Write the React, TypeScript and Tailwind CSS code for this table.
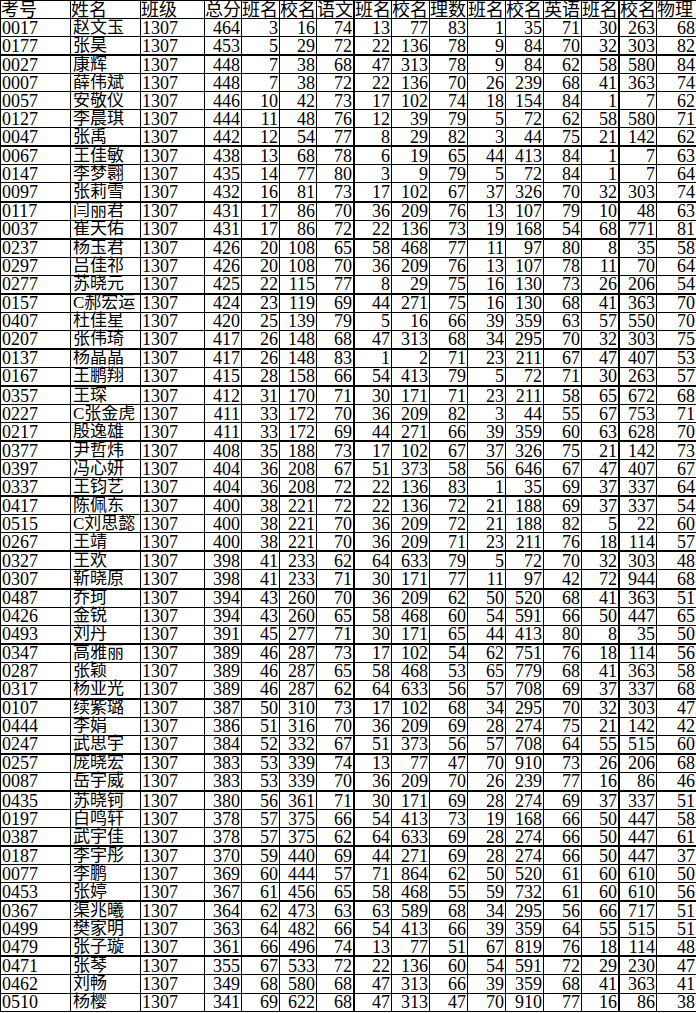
import React from 'react'

const HEAD = ['考号', '姓名', '班级', '总分', '班名', '校名', '语文', '班名', '校名', '理数', '班名', '校名', '英语', '班名', '校名', '物理']

const RAW = `0017 赵文玉 1307 464 3 16 74 13 77 83 1 35 71 30 263 68
0177 张昊 1307 453 5 29 72 22 136 78 9 84 70 32 303 82
0027 康辉 1307 448 7 38 68 47 313 78 9 84 62 58 580 84
0007 薛伟斌 1307 448 7 38 72 22 136 70 26 239 68 41 363 74
0057 安敬仪 1307 446 10 42 73 17 102 74 18 154 84 1 7 62
0127 李晨琪 1307 444 11 48 76 12 39 79 5 72 62 58 580 71
0047 张禹 1307 442 12 54 77 8 29 82 3 44 75 21 142 62
0067 王佳敏 1307 438 13 68 78 6 19 65 44 413 84 1 7 63
0147 李梦翾 1307 435 14 77 80 3 9 79 5 72 84 1 7 64
0097 张莉雪 1307 432 16 81 73 17 102 67 37 326 70 32 303 74
0117 闫丽君 1307 431 17 86 70 36 209 76 13 107 79 10 48 63
0037 崔天佑 1307 431 17 86 72 22 136 73 19 168 54 68 771 81
0237 杨玉君 1307 426 20 108 65 58 468 77 11 97 80 8 35 58
0297 吕佳祁 1307 426 20 108 70 36 209 76 13 107 78 11 70 64
0277 苏晓元 1307 425 22 115 77 8 29 75 16 130 73 26 206 54
0157 C郝宏运 1307 424 23 119 69 44 271 75 16 130 68 41 363 70
0407 杜佳星 1307 420 25 139 79 5 16 66 39 359 63 57 550 70
0207 张伟琦 1307 417 26 148 68 47 313 68 34 295 70 32 303 75
0137 杨晶晶 1307 417 26 148 83 1 2 71 23 211 67 47 407 53
0167 王鹏翔 1307 415 28 158 66 54 413 79 5 72 71 30 263 57
0357 王琛 1307 412 31 170 71 30 171 71 23 211 58 65 672 68
0227 C张金虎 1307 411 33 172 70 36 209 82 3 44 55 67 753 71
0217 殷逸雄 1307 411 33 172 69 44 271 66 39 359 60 63 628 70
0377 尹哲炜 1307 408 35 188 73 17 102 67 37 326 75 21 142 73
0397 冯心妍 1307 404 36 208 67 51 373 58 56 646 67 47 407 67
0337 王钧艺 1307 404 36 208 72 22 136 83 1 35 69 37 337 64
0417 陈佩东 1307 400 38 221 72 22 136 72 21 188 69 37 337 54
0515 C刘思懿 1307 400 38 221 70 36 209 72 21 188 82 5 22 60
0267 王靖 1307 400 38 221 70 36 209 71 23 211 76 18 114 57
0327 王欢 1307 398 41 233 62 64 633 79 5 72 70 32 303 48
0307 靳晓原 1307 398 41 233 71 30 171 77 11 97 42 72 944 68
0487 乔珂 1307 394 43 260 70 36 209 62 50 520 68 41 363 51
0426 金锐 1307 394 43 260 65 58 468 60 54 591 66 50 447 65
0493 刘丹 1307 391 45 277 71 30 171 65 44 413 80 8 35 50
0347 高雅丽 1307 389 46 287 73 17 102 54 62 751 76 18 114 56
0287 张颖 1307 389 46 287 65 58 468 53 65 779 68 41 363 58
0317 杨亚光 1307 389 46 287 62 64 633 56 57 708 69 37 337 68
0107 续紫璐 1307 387 50 310 73 17 102 68 34 295 70 32 303 47
0444 李娟 1307 386 51 316 70 36 209 69 28 274 75 21 142 42
0247 武思宇 1307 384 52 332 67 51 373 56 57 708 64 55 515 60
0257 庞晓宏 1307 383 53 339 74 13 77 47 70 910 73 26 206 68
0087 岳宇威 1307 383 53 339 70 36 209 70 26 239 77 16 86 46
0435 苏晓钶 1307 380 56 361 71 30 171 69 28 274 69 37 337 51
0197 白鸣轩 1307 378 57 375 66 54 413 73 19 168 66 50 447 58
0387 武宇佳 1307 378 57 375 62 64 633 69 28 274 66 50 447 61
0187 李宇彤 1307 370 59 440 69 44 271 69 28 274 66 50 447 37
0077 李鹏 1307 369 60 444 57 71 864 62 50 520 61 60 610 50
0453 张婷 1307 367 61 456 65 58 468 55 59 732 61 60 610 56
0367 渠兆曦 1307 364 62 473 63 63 589 68 34 295 56 66 717 51
0499 樊家明 1307 363 64 482 66 54 413 66 39 359 64 55 515 51
0479 张子璇 1307 361 66 496 74 13 77 51 67 819 76 18 114 48
0471 张琴 1307 355 67 533 72 22 136 60 54 591 72 29 230 47
0462 刘畅 1307 349 68 580 68 47 313 66 39 359 68 41 363 41
0510 杨樱 1307 341 69 622 68 47 313 47 70 910 77 16 86 38`

const ROWS = RAW.split('\n').map((line) => line.trim().split(' '))

// rows whose bottom rule prints heavier in the scan
const THICK = new Set([1, 6, 9, 11, 14, 17, 19, 22, 25, 28, 30, 33, 36, 39, 41, 44, 47, 50, 54])
// columns whose right rule prints heavier
const THICK_COL = new Set([6, 13])

const font = { fontFamily: '"Liberation Serif", "Noto Sans CJK SC", serif' }

const gridCols =
  'grid grid-cols-[70px_70px_64px_37px_38px_37px_38px_37px_38px_38px_38px_38px_38px_38px_37px_40px]'

const rule = (ci: number) => (THICK_COL.has(ci) ? 'border-r-2' : 'border-r')

export default function App() {
  return (
    <div className="w-[696px] h-[1013px] overflow-hidden bg-white text-black" style={font}>
      <div className="flex h-[1012px] w-[736px] flex-col border-l border-black">
        <div className={`${gridCols} flex-1 border-t border-b border-black`}>
          {HEAD.map((h, i) => (
            <div
              key={i}
              className={`flex items-center whitespace-nowrap border-black text-[18px] leading-[16px] ${rule(i)}`}
            >
              {h}
            </div>
          ))}
        </div>
        {ROWS.map((r, ri) => (
          <div
            key={ri}
            className={`${gridCols} flex-1 border-black ${THICK.has(ri) ? 'border-b-2' : 'border-b'}`}
          >
            {r.map((c, ci) => (
              <div
                key={ci}
                className={
                  'flex items-center whitespace-nowrap border-black leading-[16px] ' +
                  rule(ci) +
                  (ci === 1 ? ' justify-start pl-[2px]' : ci < 3 ? ' justify-start pl-px' : ' justify-end pr-px') +
                  (ci === 1 ? ' text-[17px]' : ' text-[18px]')
                }
              >
                {c}
              </div>
            ))}
          </div>
        ))}
      </div>
    </div>
  )
}
